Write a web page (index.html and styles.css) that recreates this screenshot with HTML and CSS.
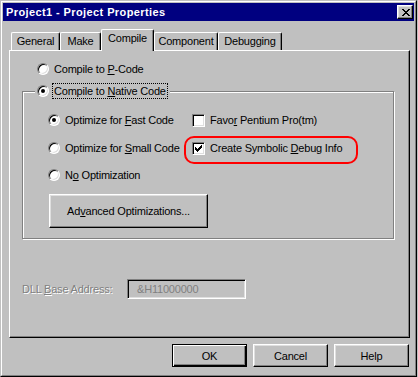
FILE: index.html
```html
<!DOCTYPE html>
<html>
<head>
<meta charset="utf-8">
<link rel="stylesheet" href="styles.css">
</head>
<body>
<div class="win">
  <div class="frame">
    <div class="titlebar">
      <span class="title">Project1 - Project Properties</span>
      <span class="close">
        <svg width="8" height="7" viewBox="0 0 8 7" shape-rendering="crispEdges"><path d="M0 0h2v1H0zM6 0h2v1H6zM1 1h2v1H1zM5 1h2v1H5zM2 2h4v1H2zM3 3h2v1H3zM2 4h4v1H2zM1 5h2v1H1zM5 5h2v1H5zM0 6h2v1H0zM6 6h2v1H6z" fill="#000"/></svg>
      </span>
    </div>
    <div class="tabs">
      <div class="tab t-general">General</div>
      <div class="tab t-make">Make</div>
      <div class="tab sel t-compile">Compile</div>
      <div class="tab t-component">Component</div>
      <div class="tab t-debug">Debugging</div>
    </div>
    <div class="panel">
      <div class="opt first"><span class="radio"></span><span class="lbl">Compile to <u>P</u>-Code</span></div>
      <fieldset class="group">
        <legend class="legend"><div class="opt"><span class="radio on"></span><span class="lbl focus">Compile to <u>N</u>ative Code</span></div></legend>
        <div class="grid">
          <div class="opt"><span class="radio on"></span><span class="lbl">Optimize for <u>F</u>ast Code</span></div>
          <div class="opt"><span class="check"></span><span class="lbl">Favo<u>r</u> Pentium Pro(tm)</span></div>
          <div class="opt"><span class="radio"></span><span class="lbl">Optimize for <u>S</u>mall Code</span></div>
          <div class="opt"><span class="check"><svg width="11" height="11" viewBox="1 1 11 11" shape-rendering="crispEdges"><path d="M9 3h1v1H9zM8 4h2v1H8zM3 5h1v1H3zM7 5h3v1H7zM3 6h2v1H3zM6 6h3v1H6zM3 7h5v1H3zM4 8h3v1H4zM5 9h1v1H5z" fill="#000"/></svg></span><span class="lbl">Create Symbolic <u>D</u>ebug Info</span></div>
          <div class="opt"><span class="radio"></span><span class="lbl">N<u>o</u> Optimization</span></div>
        </div>
        <button class="btn adv">Ad<u>v</u>anced Optimizations...</button>
      </fieldset>
      <div class="dll">
        <span class="dis">DLL <u>B</u>ase Address:</span>
        <span class="field">&amp;H11000000</span>
      </div>
      <div class="hilite"></div>
    </div>
    <div class="buttons">
      <button class="btn def">OK</button>
      <button class="btn">Cancel</button>
      <button class="btn">Help</button>
    </div>
  </div>
</div>
</body>
</html>
```
FILE: styles.css
```css
html, body {
  margin: 0;
  padding: 0;
  background: #c0c0c0;
  overflow: hidden;
}
body {
  font-family: "Liberation Sans", Arial, sans-serif;
  font-size: 11px;
  letter-spacing: -0.2px;
  color: #000;
}
.win {
  box-sizing: border-box;
  width: 417px;
  height: 377px;
  border: 1px solid;
  border-color: #c0c0c0 #000 #000 #c0c0c0;
}
.frame {
  box-sizing: border-box;
  height: 100%;
  border: 1px solid;
  border-color: #fff #808080 #808080 #fff;
  padding: 1px;
}
.titlebar {
  height: 18px;
  background: #000080;
  display: flex;
  align-items: center;
  justify-content: space-between;
  padding: 0 1px 0 3px;
}
.title {
  color: #fff;
  font-weight: bold;
  letter-spacing: 0.4px;
  line-height: 18px;
}
.close {
  box-sizing: border-box;
  width: 16px;
  height: 14px;
  background: #c0c0c0;
  border: 1px solid;
  border-color: #fff #000 #000 #fff;
  box-shadow: inset -1px -1px #808080, inset 1px 1px #dfdfdf;
  display: flex;
  align-items: center;
  justify-content: center;
  padding-left: 1px;
}
.close svg { display: block; }

.tabs {
  display: flex;
  align-items: flex-end;
  height: 21px;
  margin: 8px 0 0 8px;
}
.tab {
  box-sizing: border-box;
  height: 18px;
  border-left: 1px solid #fff;
  border-top: 1px solid #fff;
  border-right: 1px solid #000;
  border-radius: 2px 2px 0 0;
  box-shadow: inset -1px 0 #808080;
  text-align: center;
  line-height: 17px;
  background: #c0c0c0;
}
.t-general { width: 49px; }
.t-make { width: 41px; }
.t-compile { width: 53px; }
.t-component { width: 64px; }
.t-debug { width: 64px; }
.tab.sel {
  height: 22px;
  margin-bottom: -1px;
  padding-bottom: 4px;
  position: relative;
  z-index: 1;
}

.panel {
  position: relative;
  box-sizing: border-box;
  width: 401px;
  height: 288px;
  margin-left: 6px;
  border: 1px solid;
  border-color: #fff #000 #000 #fff;
  box-shadow: inset -1px -1px #808080;
}
.opt {
  display: flex;
  align-items: center;
  height: 16px;
  gap: 3px;
  white-space: nowrap;
}
.opt.first {
  margin: 10px 0 0 27px;
}
.lbl {
  border: 1px dotted transparent;
  padding: 0 1px;
  line-height: 14px;
}
.lbl.focus {
  border-color: #000;
}
.radio {
  position: relative;
  box-sizing: border-box;
  flex: none;
  width: 12px;
  height: 12px;
  border-radius: 50%;
  border: 1px solid;
  border-color: #808080 #fff #fff #808080;
  box-shadow: inset 1px 1px #000, inset -1px -1px #dfdfdf;
  background: #fff;
}
.radio.on::after {
  content: "";
  position: absolute;
  left: 3px;
  top: 3px;
  width: 4px;
  height: 4px;
  border-radius: 50%;
  background: #000;
}
.check {
  box-sizing: border-box;
  flex: none;
  width: 13px;
  height: 13px;
  border: 1px solid;
  border-color: #808080 #fff #fff #808080;
  box-shadow: inset 1px 1px #000, inset -1px -1px #dfdfdf;
  background: #fff;
}
.check svg { display: block; }

.group {
  box-sizing: border-box;
  width: 372px;
  margin: 6px 0 0 12px;
  padding: 0 0 10px 0;
  border: 1px solid #808080;
  box-shadow: inset 1px 1px #fff, 1px 1px #fff;
  min-inline-size: 0;
}
.legend {
  margin-left: 12px;
  padding: 0 2px;
  background: #c0c0c0;
}
.grid {
  display: grid;
  grid-template-columns: 144px 1fr;
  grid-template-rows: 28px 27px 16px;
  align-items: start;
  margin: 13px 0 0 25px;
}

.btn {
  box-sizing: border-box;
  font-family: inherit;
  font-size: 11px;
  letter-spacing: -0.2px;
  color: #000;
  background: #c0c0c0;
  padding: 0;
  border: 1px solid;
  border-color: #fff #000 #000 #fff;
  box-shadow: inset -1px -1px #808080, inset 1px 1px #dfdfdf;
  width: 75px;
  height: 23px;
}
.btn.adv {
  display: block;
  width: 159px;
  height: 34px;
  margin: 11px 0 0 26px;
}
.btn.def {
  border-color: #000;
  box-shadow: inset 1px 1px #fff, inset -1px -1px #000, inset -2px -2px #808080;
}

.dll {
  display: flex;
  align-items: center;
  height: 20px;
  margin: 40px 0 0 12px;
}
.dis {
  width: 105px;
  color: #808080;
  text-shadow: 1px 1px #fff;
  white-space: nowrap;
}
.field {
  box-sizing: border-box;
  width: 119px;
  height: 20px;
  border: 1px solid;
  border-color: #808080 #fff #fff #808080;
  box-shadow: inset 1px 1px #000, inset -1px -1px #dfdfdf;
  color: #808080;
  padding-left: 9px;
  line-height: 18px;
}
.hilite {
  position: absolute;
  left: 174px;
  top: 85px;
  width: 174px;
  height: 28px;
  box-sizing: border-box;
  border: 2px solid #f00;
  border-radius: 10px;
}

.buttons {
  display: flex;
  justify-content: flex-end;
  gap: 6px;
  margin: 6px 5px 0 0;
}
```
